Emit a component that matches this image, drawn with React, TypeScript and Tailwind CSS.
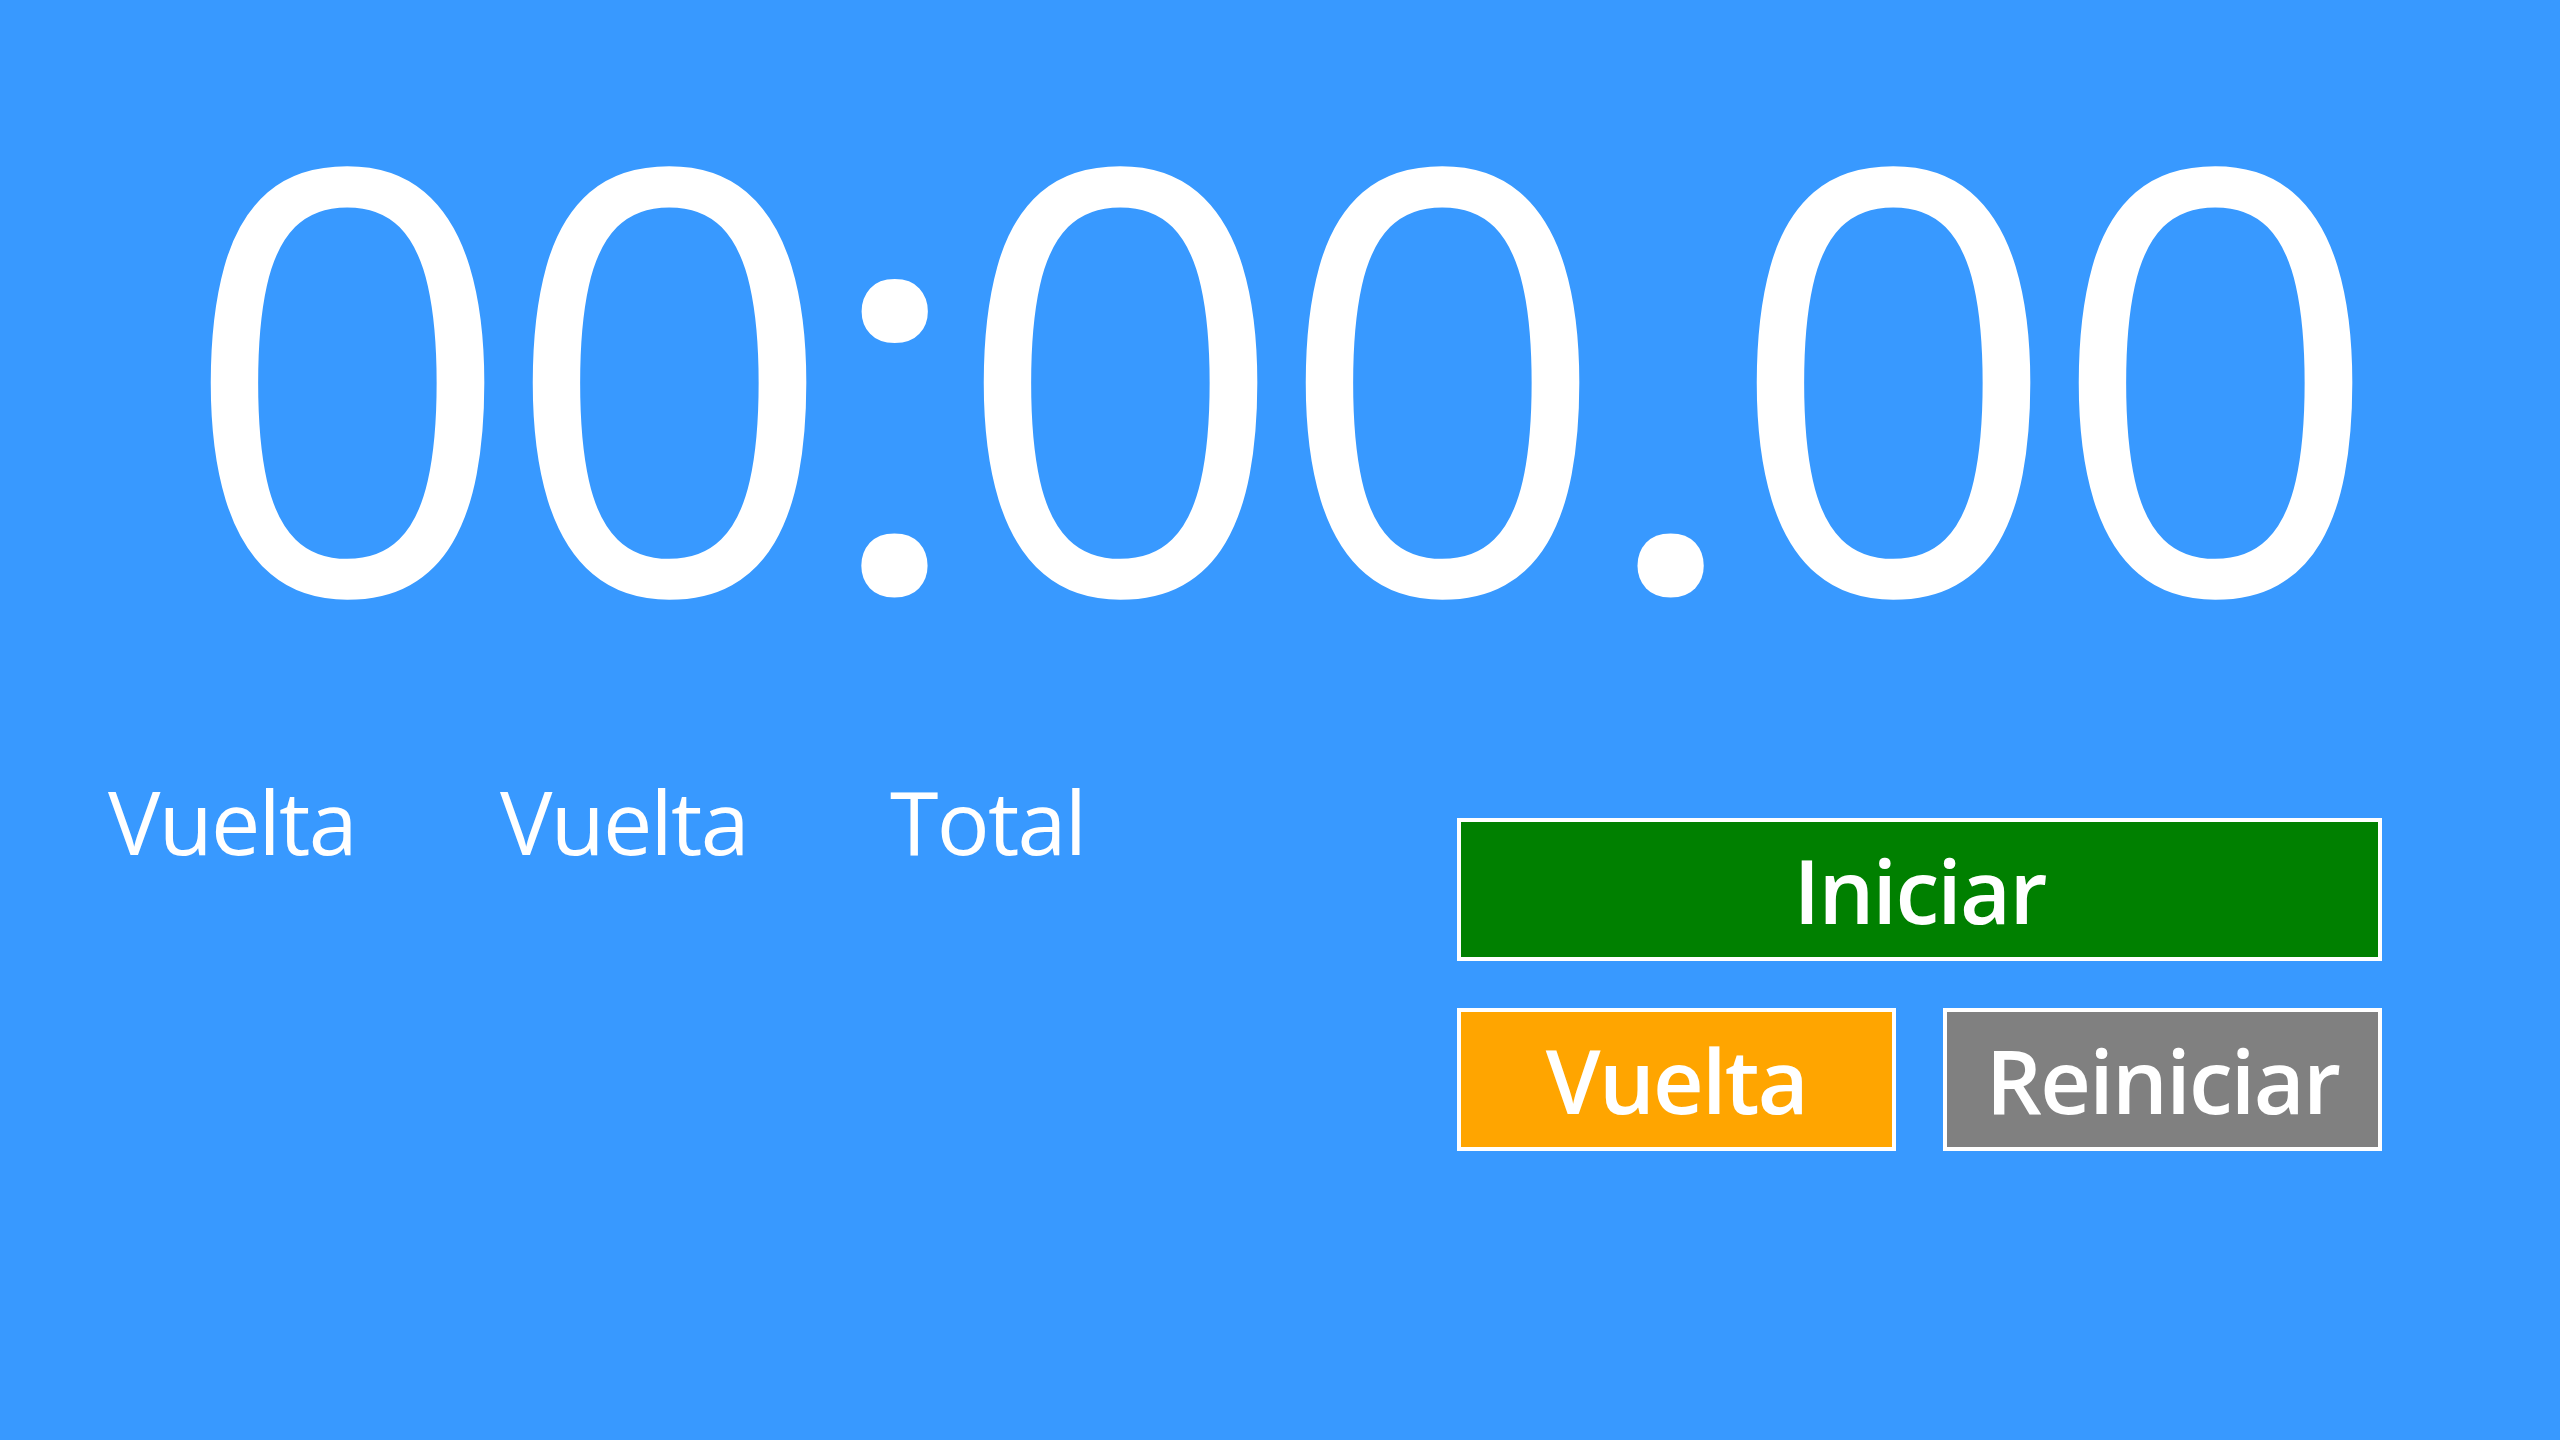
import React from "react";

const chars = ["0", "0", ":", "0", "0", ".", "0", "0"];

export default function App() {
  return (
    <div
      className="w-full h-screen bg-[#3899ff] text-white overflow-hidden flex flex-col"
      style={{ fontFamily: '"Open Sans", "Noto Sans", sans-serif' }}
    >
      <div className="mt-[70px] h-[590px] flex items-baseline justify-center pr-[12px] text-[590px] leading-none font-normal">
        {chars.map((c, i) =>
          c === ":" || c === "." ? (
            <span
              key={i}
              className="inline-block w-[129px] text-center"
              style={{ fontFamily: 'Roboto, "Open Sans", sans-serif' }}
            >
              {c}
            </span>
          ) : (
            <span key={i} className="inline-block w-[322px] text-center">
              <span className="inline-block scale-x-[0.985]">{c}</span>
            </span>
          )
        )}
      </div>
      <div className="mt-[117px] flex items-start">
        <div className="pl-[108px] w-[1457px] grid grid-cols-[392px_390px_392px] text-[88px] leading-none tracking-[-0.02em]">
          <span>Vuelta</span>
          <span>Vuelta</span>
          <span>Total</span>
        </div>
        <div className="mt-[41px] w-[925px] flex flex-col gap-[47px] font-semibold text-[88px] leading-none">
          <button className="h-[143px] w-full bg-[#008000] border-4 border-white flex items-center justify-center tracking-[-0.02em]">
            Iniciar
          </button>
          <div className="flex gap-[47px]">
            <button className="h-[143px] w-[439px] bg-[#ffa500] border-4 border-white flex items-center justify-center tracking-[-0.02em]">
              Vuelta
            </button>
            <button className="h-[143px] w-[439px] bg-[#808080] border-4 border-white flex items-center justify-center tracking-[-0.02em]">
              Reiniciar
            </button>
          </div>
        </div>
      </div>
    </div>
  );
}
